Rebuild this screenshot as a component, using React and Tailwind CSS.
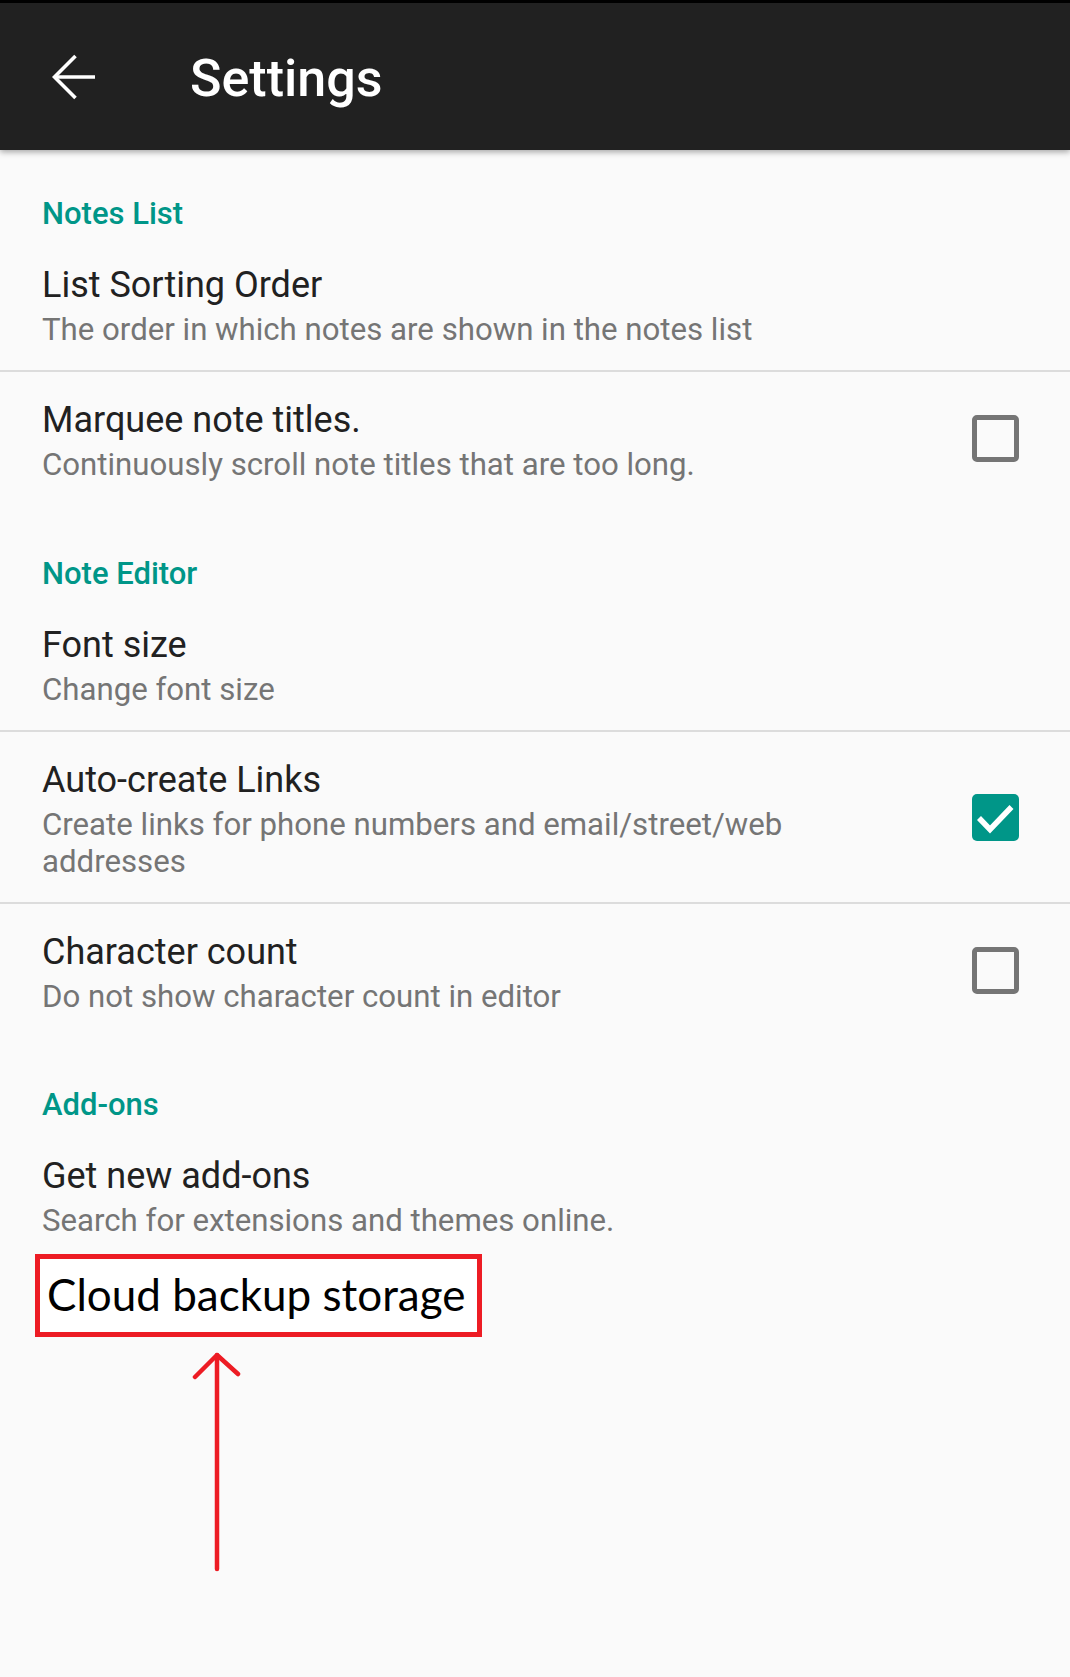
import React from "react";

const roboto = { fontFamily: "Roboto, 'Noto Sans', sans-serif" };

function Checkbox({ checked }) {
  if (checked) {
    return (
      <div className="w-[47px] h-[47px] rounded-[5px] bg-[#009688] flex items-center justify-center shrink-0">
        <svg width="47" height="47" viewBox="0 0 47 47">
          <polyline points="7,24 18,35.5 39.5,13" fill="none" stroke="#ffffff" strokeWidth="5.5" />
        </svg>
      </div>
    );
  }
  return <div className="w-[47px] h-[47px] rounded-[5px] border-[5px] border-[#757575] shrink-0" />;
}

function Item({ title, lines, checkbox, divider }) {
  return (
    <div>
      <div className="flex items-center pl-[42px] pr-[51px] pt-[22px] pb-[22px]">
        <div className="flex-1 min-w-0">
          <div className="text-[36px] leading-[52px] text-[#212121]">{title}</div>
          {lines.map((l, i) => (
            <div key={i} className="text-[31.2px] leading-[37px] text-[#757575]">
              {l}
            </div>
          ))}
        </div>
        {checkbox !== undefined && <Checkbox checked={checkbox} />}
      </div>
      {divider && <div className="h-[2px] bg-[#dcdcdc]" />}
    </div>
  );
}

export default function App() {
  return (
    <div className="w-[1070px] h-[1677px] bg-[#fafafa] overflow-hidden" style={roboto}>
      <div className="relative z-10 h-[150px] bg-[#212121] border-t-[3px] border-black flex items-center shadow-[0_2px_6px_rgba(0,0,0,0.35)]">
        <svg className="ml-[52px] shrink-0" width="44" height="46" viewBox="0 0 44 46">
          <path d="M2.5 23 H43" stroke="#ffffff" strokeWidth="3.6" fill="none" />
          <path d="M23.5 2 L2.5 23 L23.5 44" stroke="#ffffff" strokeWidth="3.6" fill="none" />
        </svg>
        <div className="ml-[94px] text-[52px] leading-none font-medium text-white mt-[4px]">Settings</div>
      </div>

      <div className="pt-[44px]">
        <div className="pl-[42px] pb-[3px]">
          <div className="text-[31px] leading-[40px] font-medium text-[#009688]">Notes List</div>
        </div>
      </div>
      <Item title="List Sorting Order" lines={["The order in which notes are shown in the notes list"]} divider />
      <Item title="Marquee note titles." lines={["Continuously scroll note titles that are too long."]} checkbox={false} />

      <div className="pt-[49px] pl-[42px] pb-[3px]">
        <div className="text-[31px] leading-[40px] font-medium text-[#009688]">Note Editor</div>
      </div>
      <Item title="Font size" lines={["Change font size"]} divider />
      <Item
        title="Auto-create Links"
        lines={["Create links for phone numbers and email/street/web", "addresses"]}
        checkbox={true}
        divider
      />
      <Item title="Character count" lines={["Do not show character count in editor"]} checkbox={false} />

      <div className="pt-[48px] pl-[42px] pb-[3px]">
        <div className="text-[31px] leading-[40px] font-medium text-[#009688]">Add-ons</div>
      </div>
      <div className="pl-[42px] pt-[22px]">
        <div className="text-[36px] leading-[52px] text-[#212121]">Get new add-ons</div>
        <div className="text-[31.2px] leading-[37px] text-[#757575]">Search for extensions and themes online.</div>
      </div>

      <div className="mt-[15px] ml-[35px] w-[447px] h-[83px] border-[5px] border-[#ed1c24] bg-white flex items-center pl-[7px]">
        <span className="text-[44px] leading-none text-black mb-[4px]" style={{ fontFamily: "Lato, 'Open Sans', sans-serif" }}>
          Cloud backup storage
        </span>
      </div>

      <svg className="mt-[15px] ml-[190px]" width="54" height="220" viewBox="0 0 54 220">
        <path d="M27 3 V217" stroke="#ed1c24" strokeWidth="4.5" strokeLinecap="round" fill="none" />
        <path d="M5 25 L27 3 L48 22" stroke="#ed1c24" strokeWidth="4.5" strokeLinecap="round" strokeLinejoin="round" fill="none" />
      </svg>
    </div>
  );
}
